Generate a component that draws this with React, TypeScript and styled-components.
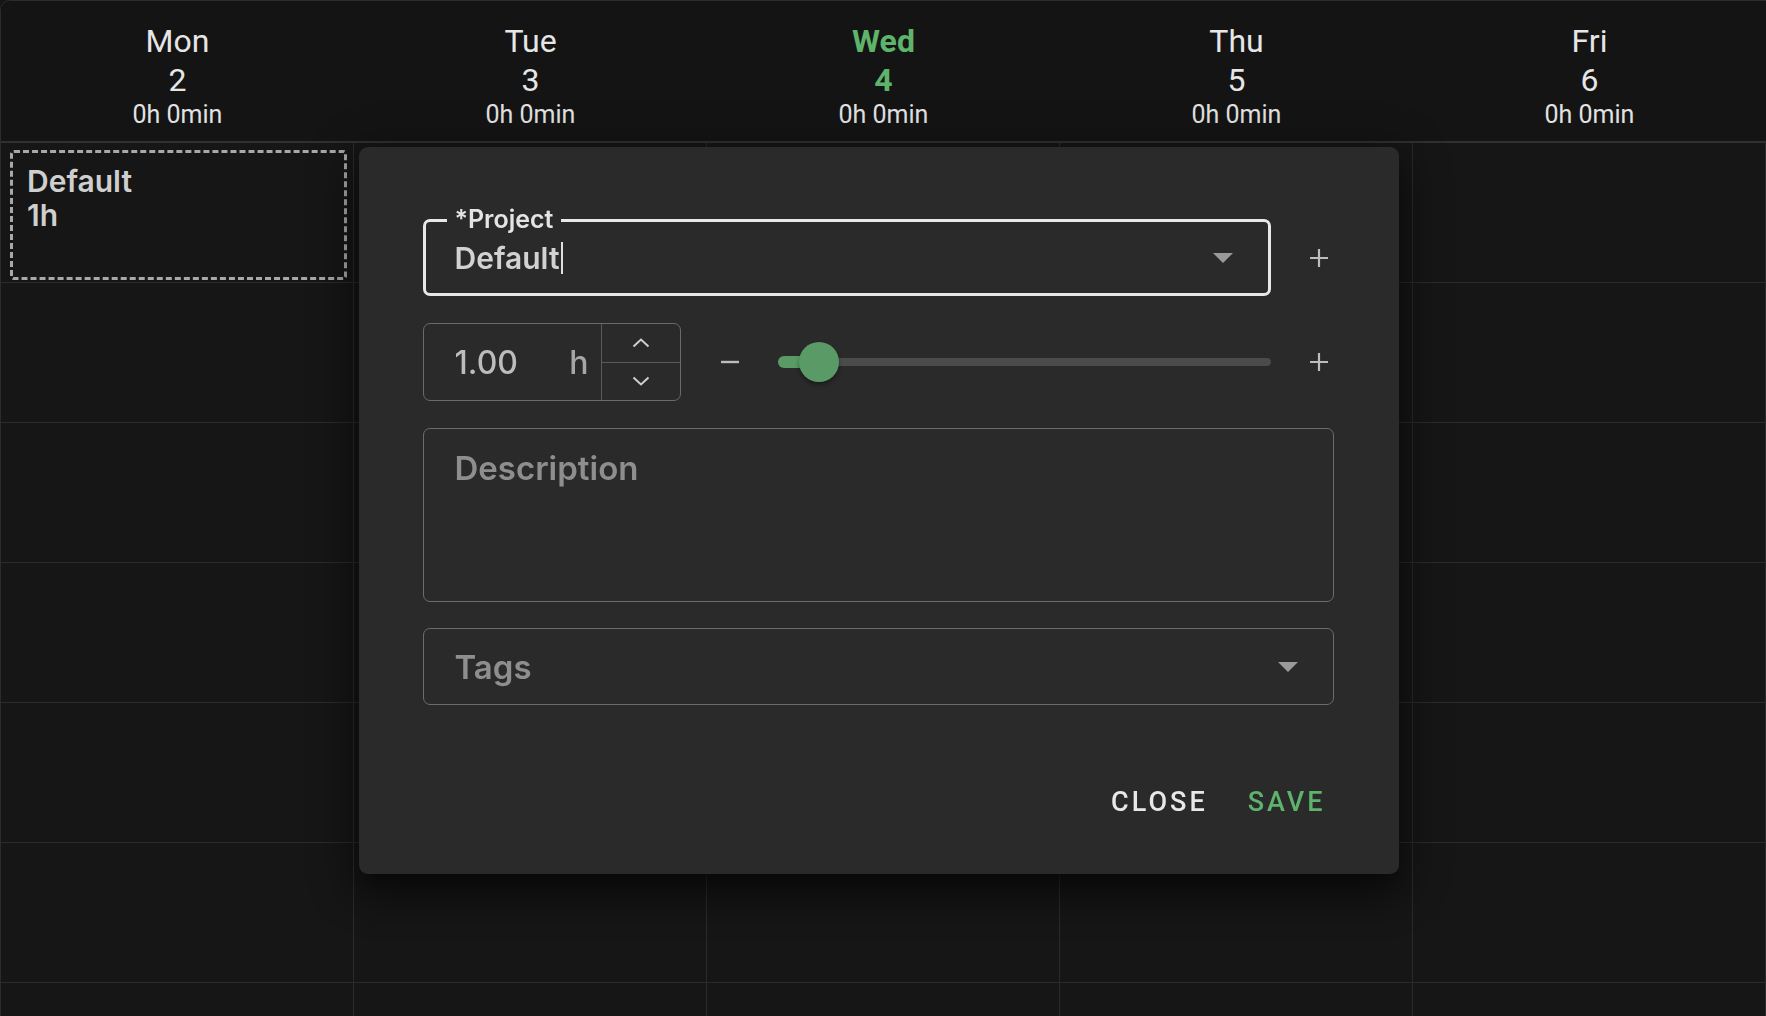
import styled, { createGlobalStyle } from 'styled-components';

const GlobalStyle = createGlobalStyle`
  * { box-sizing: border-box; }
  html, body { margin: 0; padding: 0; background: #151515; }
  body { font-family: Inter, "Noto Sans", sans-serif; overflow: hidden; }
`;

const Calendar = styled.div`
  width: 1766px;
  height: 1016px;
  border-left: 1px solid #2c2c2c;
  border-top: 1px solid #2c2c2c;
  border-top-left-radius: 10px;
  overflow: hidden;
  background: #161616;
`;

const Header = styled.div`
  display: grid;
  grid-template-columns: repeat(5, 1fr);
  height: 142px;
  background: #141414;
  border-bottom: 2px solid #303030;
`;

const DayHead = styled.div<{ $today?: boolean }>`
  display: flex;
  flex-direction: column;
  align-items: center;
  padding-top: 21px;
  font-family: Roboto, "Liberation Sans", sans-serif;
  color: ${(p) => (p.$today ? '#5fb46b' : '#e6e6e6')};
  font-weight: ${(p) => (p.$today ? 700 : 400)};
`;

const DayName = styled.div`
  font-size: 32px;
  line-height: 38px;
`;

const DayNum = styled.div`
  font-size: 32px;
  line-height: 40px;
`;

const DayTotal = styled.div`
  font-size: 25px;
  line-height: 30px;
  font-weight: 400;
  color: #e2e2e2;
`;

const Body = styled.div`
  display: grid;
  grid-template-columns: repeat(5, 1fr);
  grid-auto-rows: 140px;
`;

const Cell = styled.div`
  border-right: 1px solid #2b2b2b;
  border-bottom: 1px solid #2b2b2b;
  padding: 7px 6px 0 9px;
`;

const EventBox = styled.div`
  height: 130px;
  border: 3.5px dashed #a8a8a8;
  border-radius: 4px;
  padding: 11px 14px;
  color: #cfcfcf;
  font-size: 30px;
  font-weight: 600;
  line-height: 34px;
`;

const Overlay = styled.div`
  position: fixed;
  inset: 0;
  display: flex;
  align-items: center;
  justify-content: center;
  padding: 5px 9px 0 0;
`;

const Dialog = styled.div`
  width: 1040px;
  height: 727px;
  background: #2a2a2a;
  border-radius: 9px;
  box-shadow: 0 11px 15px -7px rgba(0, 0, 0, 0.4), 0 24px 38px 3px rgba(0, 0, 0, 0.3),
    0 9px 46px 8px rgba(0, 0, 0, 0.3);
  padding: 72px 65px 0 64px;
  display: flex;
  flex-direction: column;
`;

const Row = styled.div`
  display: flex;
  align-items: center;
  gap: 33px;
  margin-bottom: 27px;
`;

const Outlined = styled.div<{ $focused?: boolean; $tall?: boolean }>`
  position: relative;
  flex: 1;
  height: ${(p) => (p.$tall ? '174px' : '77px')};
  border: ${(p) => (p.$focused ? '3px solid #e8e8e8' : '1px solid #6c6c6c')};
  border-radius: 7px;
  display: flex;
  align-items: ${(p) => (p.$tall ? 'flex-start' : 'center')};
  padding: ${(p) => (p.$tall ? '19px 0 0 31px' : p.$focused ? '0 0 0 29px' : '0 0 0 31px')};
  font-size: 33px;
`;

const FloatLabel = styled.span`
  position: absolute;
  left: 21px;
  top: -17px;
  padding: 0 8px;
  background: #2a2a2a;
  color: #e4e4e4;
  font-size: 25px;
  line-height: 28px;
  font-weight: 600;
`;

const Value = styled.span`
  color: #d2d2d2;
  font-size: 30px;
  font-weight: 600;
  line-height: 40px;
  flex: 1;
  display: flex;
  align-items: center;
`;

const Caret = styled.span`
  display: inline-block;
  width: 2px;
  height: 32px;
  background: #e0e0e0;
  margin-left: 1px;
`;

const Placeholder = styled.span`
  color: #8e8e8e;
  font-weight: 600;
  line-height: 40px;
  flex: 1;
`;

const Arrow = styled.svg`
  width: 20px;
  height: 10px;
  margin-right: 35px;
  flex-shrink: 0;
`;

const IconButton = styled.button`
  width: 30px;
  height: 30px;
  padding: 0;
  border: none;
  background: none;
  display: flex;
  align-items: center;
  justify-content: center;
  flex-shrink: 0;
`;

const NumberBox = styled.div`
  width: 258px;
  height: 78px;
  border: 1px solid #6a6a6a;
  border-radius: 7px;
  display: flex;
  margin-right: 1px;
`;

const NumberText = styled.div`
  flex: 1;
  display: flex;
  align-items: center;
  justify-content: space-between;
  padding: 0 12px 0 31px;
  font-size: 32px;
  font-weight: 500;
  color: #bcbcbc;
`;

const Unit = styled.span`
  color: #a6a6a6;
`;

const Spinner = styled.div`
  width: 79px;
  border-left: 1px solid #5a5a5a;
  display: flex;
  flex-direction: column;
`;

const SpinHalf = styled.div<{ $bottom?: boolean }>`
  flex: 1;
  display: flex;
  align-items: center;
  justify-content: center;
  border-top: ${(p) => (p.$bottom ? '1px solid #5a5a5a' : 'none')};
`;

const SliderWrap = styled.div`
  position: relative;
  flex: 1;
  height: 40px;
  display: flex;
  align-items: center;
`;

const Rail = styled.div`
  width: 100%;
  height: 8px;
  border-radius: 4px;
  background: #4b4b4b;
`;

const Track = styled.div`
  position: absolute;
  left: 0;
  top: 14px;
  height: 12px;
  border-radius: 6px;
  background: #5a9a66;
`;

const Thumb = styled.div`
  position: absolute;
  top: 0;
  width: 40px;
  height: 40px;
  margin-left: -20px;
  border-radius: 50%;
  background: #5a9a66;
  box-shadow: 0 3px 4px rgba(0, 0, 0, 0.35);
`;

const Field = styled.div`
  display: flex;
  margin-bottom: 26px;
`;

const Actions = styled.div`
  display: flex;
  justify-content: flex-end;
  gap: 24px;
  margin-top: 45px;
  margin-right: 0;
`;

const TextButton = styled.button<{ $primary?: boolean }>`
  border: none;
  background: none;
  padding: 10px 8px;
  font-family: Roboto, "Liberation Sans", sans-serif;
  font-size: 27px;
  font-weight: 500;
  letter-spacing: 3px;
  color: ${(p) => (p.$primary ? '#5db36b' : '#e8e8e8')};
`;

const days = [
  { name: 'Mon', num: 2 },
  { name: 'Tue', num: 3 },
  { name: 'Wed', num: 4, today: true },
  { name: 'Thu', num: 5 },
  { name: 'Fri', num: 6 },
];

const PlusIcon = () => (
  <svg width="20" height="20" viewBox="0 0 20 20">
    <path d="M10 1v18M1 10h18" stroke="#bdbdbd" strokeWidth="2.2" />
  </svg>
);

const MinusIcon = () => (
  <svg width="20" height="20" viewBox="0 0 20 20">
    <path d="M1 10h18" stroke="#bdbdbd" strokeWidth="2.4" />
  </svg>
);

const DownArrow = () => (
  <Arrow viewBox="0 0 20 10">
    <path d="M0 0h20L10 10z" fill="#9a9a9a" />
  </Arrow>
);

const hours = 1;
const maxHours = 12;

const App = () => {
  return (
    <>
      <GlobalStyle />
      <Calendar>
        <Header>
          {days.map((d) => (
            <DayHead key={d.name} $today={d.today}>
              <DayName>{d.name}</DayName>
              <DayNum>{d.num}</DayNum>
              <DayTotal>0h 0min</DayTotal>
            </DayHead>
          ))}
        </Header>
        <Body>
          {Array.from({ length: 35 }).map((_, i) => (
            <Cell key={i}>
              {i === 0 && (
                <EventBox>
                  Default
                  <br />
                  1h
                </EventBox>
              )}
            </Cell>
          ))}
        </Body>
      </Calendar>
      <Overlay>
        <Dialog>
          <Row>
            <Outlined $focused>
              <FloatLabel>*Project</FloatLabel>
              <Value>
                Default
                <Caret />
              </Value>
              <DownArrow />
            </Outlined>
            <IconButton>
              <PlusIcon />
            </IconButton>
          </Row>
          <Row>
            <NumberBox>
              <NumberText>
                1.00
                <Unit>h</Unit>
              </NumberText>
              <Spinner>
                <SpinHalf>
                  <svg width="18" height="10" viewBox="0 0 18 10">
                    <path d="M1.5 8.5L9 1.5l7.5 7" fill="none" stroke="#cfcfcf" strokeWidth="2" />
                  </svg>
                </SpinHalf>
                <SpinHalf $bottom>
                  <svg width="18" height="10" viewBox="0 0 18 10">
                    <path d="M1.5 1.5L9 8.5l7.5-7" fill="none" stroke="#cfcfcf" strokeWidth="2" />
                  </svg>
                </SpinHalf>
              </Spinner>
            </NumberBox>
            <IconButton>
              <MinusIcon />
            </IconButton>
            <SliderWrap>
              <Rail />
              <Track style={{ width: `${(hours / maxHours) * 100}%` }} />
              <Thumb style={{ left: `${(hours / maxHours) * 100}%` }} />
            </SliderWrap>
            <IconButton>
              <PlusIcon />
            </IconButton>
          </Row>
          <Field>
            <Outlined $tall>
              <Placeholder>Description</Placeholder>
            </Outlined>
          </Field>
          <Field>
            <Outlined>
              <Placeholder>Tags</Placeholder>
              <DownArrow />
            </Outlined>
          </Field>
          <Actions>
            <TextButton>CLOSE</TextButton>
            <TextButton $primary>SAVE</TextButton>
          </Actions>
        </Dialog>
      </Overlay>
    </>
  );
};

export default App;
